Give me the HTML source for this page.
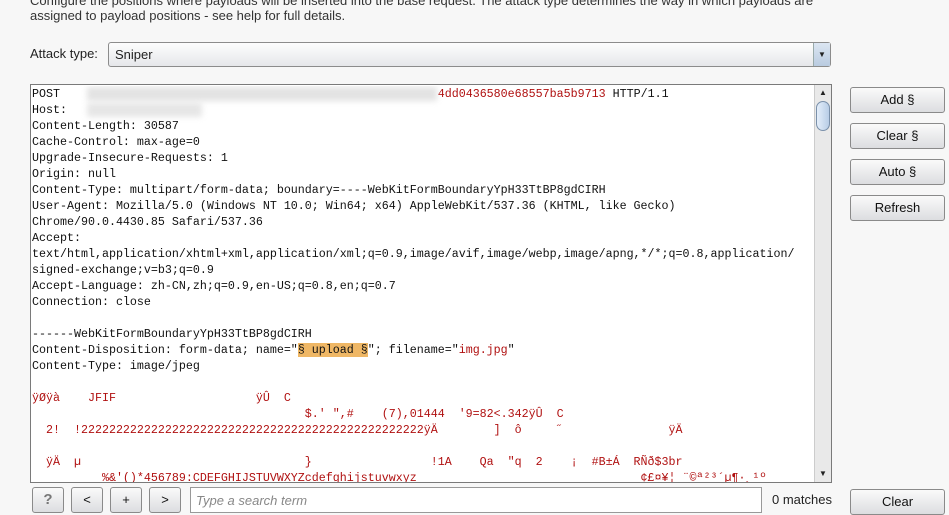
<!DOCTYPE html>
<html><head><meta charset="utf-8"><style>
body{margin:0;width:949px;height:508px;background:#f7f7f7;font-family:"Liberation Sans",sans-serif;font-size:13px;color:#222;position:relative;overflow:hidden}
.a{position:absolute}
.btn{position:absolute;border:1px solid #8a8a8a;border-radius:3px;background:linear-gradient(#fafafa,#dcdde0);text-align:center;font-size:13px;color:#111;box-sizing:border-box}
pre{margin:0;font-family:"Liberation Mono",monospace;font-size:11.67px;line-height:16px;color:#111;white-space:pre}
.r{color:#b01010}
</style></head><body>
<div class="a" style="left:30px;top:-7px;color:#333">Configure the positions where payloads will be inserted into the base request. The attack type determines the way in which payloads are</div>
<div class="a" style="left:30px;top:8px;color:#333">assigned to payload positions - see help for full details.</div>
<div class="a" style="left:30px;top:46px">Attack type:</div>
<div class="a" style="left:108px;top:42px;width:723px;height:25px;box-sizing:border-box;border:1px solid #8c8c8c;border-radius:3px;background:linear-gradient(#fdfdfd,#e6e7ea)"><span style="position:absolute;left:6px;top:4px">Sniper</span>
<div style="position:absolute;right:0;top:0;width:16px;height:23px;background:linear-gradient(#dce6f2,#b9cbe0);border-left:1px solid #9aa;font-size:8px;text-align:center;line-height:23px">▼</div></div>
<div class="a" style="left:30px;top:84px;width:802px;height:399px;box-sizing:border-box;border:1px solid #7a7a7a;background:#fff;overflow:hidden">
<div class="a" style="left:1px;top:1px;width:785px;height:397px;overflow:hidden">
<pre>POST                                                      <span class="r">4dd0436580e68557ba5b9713</span> HTTP/1.1
Host:
Content-Length: 30587
Cache-Control: max-age=0
Upgrade-Insecure-Requests: 1
Origin: null
Content-Type: multipart/form-data; boundary=----WebKitFormBoundaryYpH33TtBP8gdCIRH
User-Agent: Mozilla/5.0 (Windows NT 10.0; Win64; x64) AppleWebKit/537.36 (KHTML, like Gecko)
Chrome/90.0.4430.85 Safari/537.36
Accept:
text/html,application/xhtml+xml,application/xml;q=0.9,image/avif,image/webp,image/apng,*/*;q=0.8,application/
signed-exchange;v=b3;q=0.9
Accept-Language: zh-CN,zh;q=0.9,en-US;q=0.8,en;q=0.7
Connection: close

------WebKitFormBoundaryYpH33TtBP8gdCIRH
Content-Disposition: form-data; name="<span style="background:#efb765">§ upload §</span>"; filename="<span class="r">img.jpg</span>"
Content-Type: image/jpeg

<span class="r">ÿØÿà    JFIF                    ÿÛ  C
                                       $.' ",#    (7),01444  '9=82&lt;.342ÿÛ  C
  2!  !2222222222222222222222222222222222222222222222222ÿÄ        ]  ô     ˝               ÿÄ

  ÿÄ  µ                                }                 !1A    Qa  "q  2    ¡  #B±Á  RÑð$3br
          %&amp;'()*456789:CDEFGHIJSTUVWXYZcdefghijstuvwxyz                                ¢£¤¥¦ ¨©ª²³´µ¶·¸¹º</span></pre>
<div class="a" style="left:55px;top:1px;width:350px;height:14px;background:#dcdcdc;filter:blur(3px);opacity:.8"></div>
<div class="a" style="left:55px;top:17px;width:115px;height:14px;background:#e0e0e0;filter:blur(3px);opacity:.8"></div>
</div>
<div class="a" style="right:0;top:0;width:16px;height:397px;background:#e9e9e9;border-left:1px solid #ccc">
<div style="font-size:8px;text-align:center;height:16px;line-height:16px">▲</div>
<div style="position:absolute;top:16px;left:1px;width:14px;height:30px;border-radius:8px;background:linear-gradient(90deg,#e4eefa,#b8cde6);border:1px solid #7a90aa;box-sizing:border-box"></div>
<div style="position:absolute;bottom:0;width:16px;font-size:8px;text-align:center;height:16px;line-height:16px">▼</div></div>
</div>
<div class="btn" style="left:850px;top:87px;width:95px;height:26px;line-height:24px">Add §</div>
<div class="btn" style="left:850px;top:123px;width:95px;height:26px;line-height:24px">Clear §</div>
<div class="btn" style="left:850px;top:159px;width:95px;height:26px;line-height:24px">Auto §</div>
<div class="btn" style="left:850px;top:195px;width:95px;height:26px;line-height:24px">Refresh</div>
<div class="btn" style="left:32px;top:487px;width:32px;height:26px;line-height:24px;font-weight:bold;color:#777;font-size:15px">?</div>
<div class="btn" style="left:71px;top:487px;width:32px;height:26px;line-height:24px">&lt;</div>
<div class="btn" style="left:110px;top:487px;width:32px;height:26px;line-height:24px">+</div>
<div class="btn" style="left:149px;top:487px;width:32px;height:26px;line-height:24px">&gt;</div>
<div class="a" style="left:190px;top:487px;width:572px;height:26px;border:1px solid #999;background:#fff;box-sizing:border-box"><span style="position:absolute;left:5px;top:5px;color:#888;font-style:italic">Type a search term</span></div>
<div class="a" style="left:772px;top:492px">0 matches</div>
<div class="btn" style="left:850px;top:489px;width:95px;height:26px;line-height:24px">Clear</div>
</body></html>
